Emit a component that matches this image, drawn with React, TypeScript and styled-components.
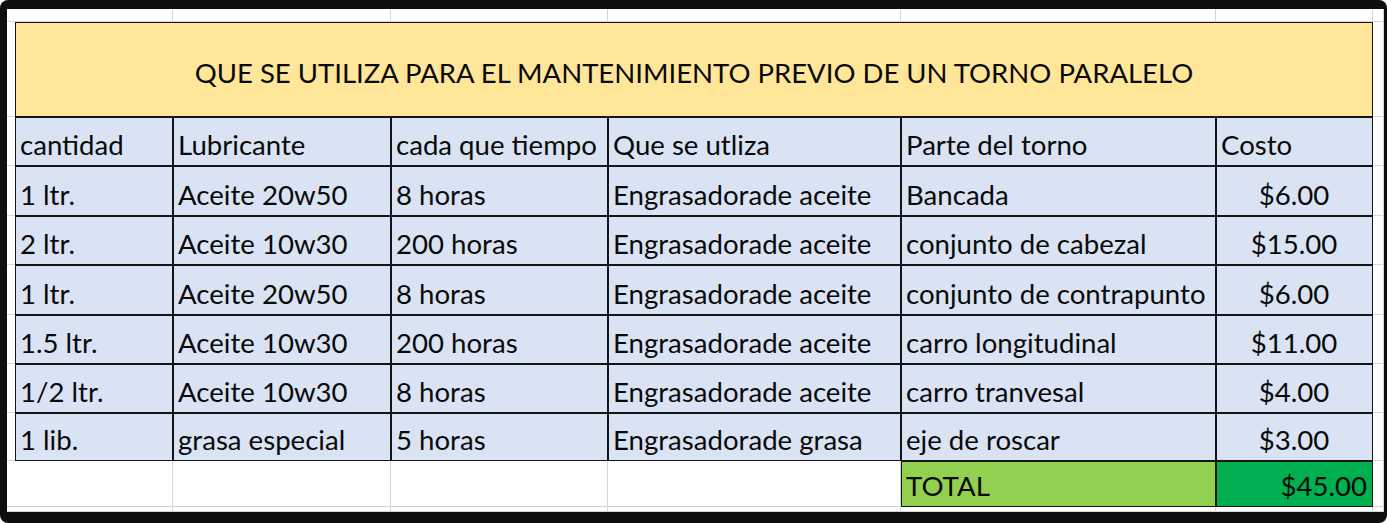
import React from 'react';
import styled, { createGlobalStyle, css } from 'styled-components';

const GlobalStyle = createGlobalStyle`
  html, body { margin: 0; padding: 0; background: #ffffff; }
  body { font-family: Lato, "Open Sans", "Liberation Sans", sans-serif; }
`;

const Frame = styled.div`
  box-sizing: border-box;
  width: 1387px;
  height: 523px;
  background: #0e0e0e;
  border-radius: 8px;
  padding: 9px 9px 11px 7px;
`;

const Sheet = styled.div`
  display: grid;
  grid-template-columns: 8px 158px 218px 217px 293px 315px 157px 5px;
  grid-template-rows: 13px 95px 49px 50px 49px 50px 49px 49px 48px 46px 5px;
  width: 1371px;
  height: 503px;
  background: #ffffff;
`;

type Variant = 'blank' | 'data' | 'totalLabel' | 'totalValue';
type Align = 'left' | 'center' | 'right';

const bg: Record<Variant, string> = {
  blank: '#ffffff',
  data: '#dae3f3',
  totalLabel: '#92d050',
  totalValue: '#00b050',
};

const Cell = styled.div<{ $variant: Variant; $align?: Align }>`
  box-sizing: border-box;
  display: flex;
  align-items: flex-end;
  justify-content: ${(p) =>
    p.$align === 'center' ? 'center' : p.$align === 'right' ? 'flex-end' : 'flex-start'};
  padding: 0 6px 5px 5px;
  background: ${(p) => bg[p.$variant]};
  font-size: 27.6px;
  line-height: 1.2;
  color: #0a0a0a;
  white-space: nowrap;
  overflow: hidden;
  ${(p) =>
    p.$variant === 'blank'
      ? css`box-shadow: inset -1px -1px 0 #d6d6d6;`
      : css`box-shadow: inset 0 0 0 1px #151515;`}
`;

const TitleCell = styled.div`
  grid-column: 2 / span 6;
  box-sizing: border-box;
  display: flex;
  align-items: center;
  justify-content: center;
  padding-top: 6px;
  background: #ffe699;
  box-shadow: inset 0 0 0 1px #151515;
  font-size: 27.5px;
  color: #0a0a0a;
  white-space: nowrap;
`;

const headers = ['cantidad', 'Lubricante', 'cada que tiempo', 'Que se utliza', 'Parte del torno', 'Costo'];

const rows: string[][] = [
  ['1 ltr.', 'Aceite 20w50', '8 horas', 'Engrasadorade aceite', 'Bancada', '$6.00'],
  ['2 ltr.', 'Aceite 10w30', '200 horas', 'Engrasadorade aceite', 'conjunto de cabezal', '$15.00'],
  ['1 ltr.', 'Aceite 20w50', '8 horas', 'Engrasadorade aceite', 'conjunto de contrapunto', '$6.00'],
  ['1.5 ltr.', 'Aceite 10w30', '200 horas', 'Engrasadorade aceite', 'carro longitudinal', '$11.00'],
  ['1/2 ltr.', 'Aceite 10w30', '8 horas', 'Engrasadorade aceite', 'carro tranvesal', '$4.00'],
  ['1 lib.', 'grasa especial', '5 horas', 'Engrasadorade grasa', 'eje de roscar', '$3.00'],
];

const blanks = (n: number, key: string) =>
  Array.from({ length: n }, (_, i) => <Cell key={`${key}-${i}`} $variant="blank" />);

export default function App() {
  return (
    <>
      <GlobalStyle />
      <Frame>
        <Sheet>
          {blanks(8, 'top')}

          <Cell $variant="blank" />
          <TitleCell>QUE SE UTILIZA PARA EL MANTENIMIENTO PREVIO DE UN TORNO PARALELO</TitleCell>
          <Cell $variant="blank" />

          <Cell $variant="blank" />
          {headers.map((h) => (
            <Cell key={h} $variant="data">{h}</Cell>
          ))}
          <Cell $variant="blank" />

          {rows.map((r, ri) => (
            <React.Fragment key={ri}>
              <Cell $variant="blank" />
              {r.map((v, ci) => (
                <Cell key={ci} $variant="data" $align={ci === 5 ? 'center' : 'left'}>
                  {v}
                </Cell>
              ))}
              <Cell $variant="blank" />
            </React.Fragment>
          ))}

          {blanks(5, 'tot')}
          <Cell $variant="totalLabel">TOTAL</Cell>
          <Cell $variant="totalValue" $align="right">$45.00</Cell>
          <Cell $variant="blank" />

          {blanks(8, 'bottom')}
        </Sheet>
      </Frame>
    </>
  );
}
